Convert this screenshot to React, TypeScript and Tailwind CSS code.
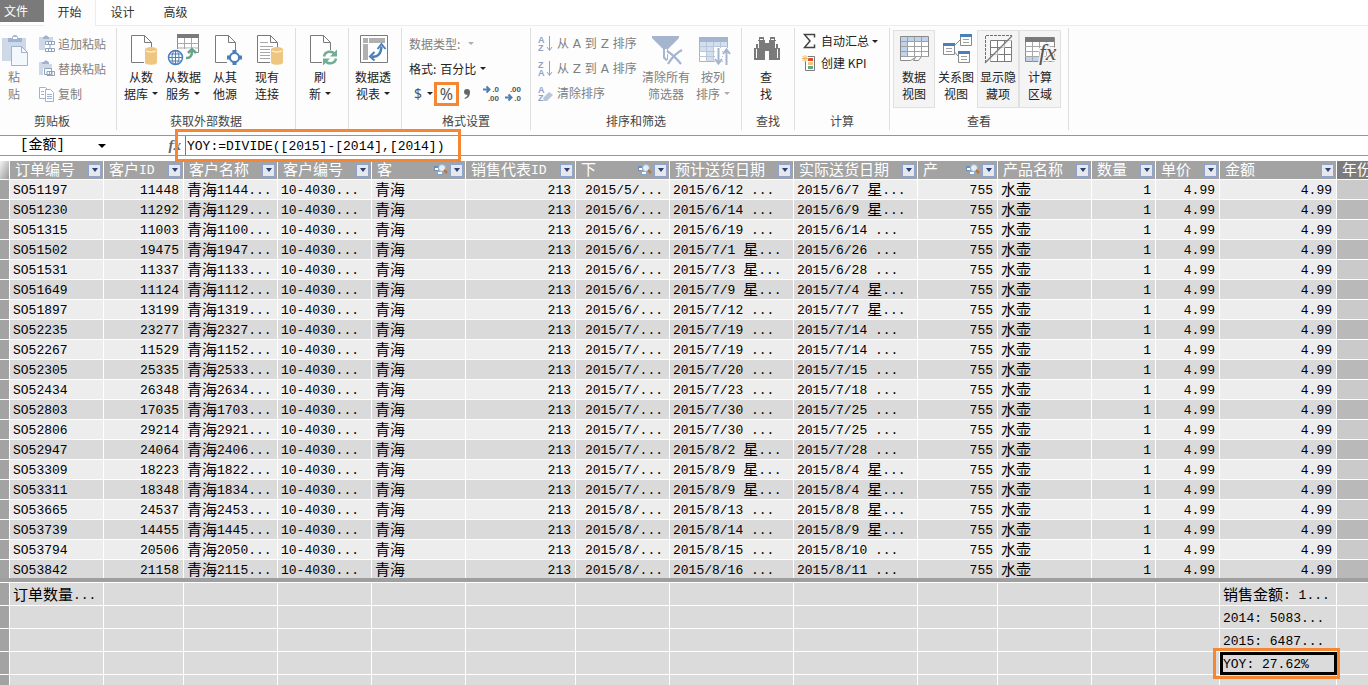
import type { ReactNode } from "react";
import clsx from "clsx";

type Order = {
  no: string;
  customer: string;
  ordered: string;
  due: string;
  shipped: string;
};

type Column = {
  title: string;
  width: string;
  align?: "right" | "indent";
  related?: boolean;
  value: (order: Order) => string;
};

const orders: Order[] = [
  { no: "SO51197", customer: "11448", ordered: "2015/5/...", due: "2015/6/12 ...", shipped: "2015/6/7 星..." },
  { no: "SO51230", customer: "11292", ordered: "2015/6/...", due: "2015/6/14 ...", shipped: "2015/6/9 星..." },
  { no: "SO51315", customer: "11003", ordered: "2015/6/...", due: "2015/6/19 ...", shipped: "2015/6/14 ..." },
  { no: "SO51502", customer: "19475", ordered: "2015/6/...", due: "2015/7/1 星...", shipped: "2015/6/26 ..." },
  { no: "SO51531", customer: "11337", ordered: "2015/6/...", due: "2015/7/3 星...", shipped: "2015/6/28 ..." },
  { no: "SO51649", customer: "11124", ordered: "2015/6/...", due: "2015/7/9 星...", shipped: "2015/7/4 星..." },
  { no: "SO51897", customer: "13199", ordered: "2015/6/...", due: "2015/7/12 ...", shipped: "2015/7/7 星..." },
  { no: "SO52235", customer: "23277", ordered: "2015/7/...", due: "2015/7/19 ...", shipped: "2015/7/14 ..." },
  { no: "SO52267", customer: "11529", ordered: "2015/7/...", due: "2015/7/19 ...", shipped: "2015/7/14 ..." },
  { no: "SO52305", customer: "25335", ordered: "2015/7/...", due: "2015/7/20 ...", shipped: "2015/7/15 ..." },
  { no: "SO52434", customer: "26348", ordered: "2015/7/...", due: "2015/7/23 ...", shipped: "2015/7/18 ..." },
  { no: "SO52803", customer: "17035", ordered: "2015/7/...", due: "2015/7/30 ...", shipped: "2015/7/25 ..." },
  { no: "SO52806", customer: "29214", ordered: "2015/7/...", due: "2015/7/30 ...", shipped: "2015/7/25 ..." },
  { no: "SO52947", customer: "24064", ordered: "2015/7/...", due: "2015/8/2 星...", shipped: "2015/7/28 ..." },
  { no: "SO53309", customer: "18223", ordered: "2015/7/...", due: "2015/8/9 星...", shipped: "2015/8/4 星..." },
  { no: "SO53311", customer: "18348", ordered: "2015/7/...", due: "2015/8/9 星...", shipped: "2015/8/4 星..." },
  { no: "SO53665", customer: "24537", ordered: "2015/8/...", due: "2015/8/13 ...", shipped: "2015/8/8 星..." },
  { no: "SO53739", customer: "14455", ordered: "2015/8/...", due: "2015/8/14 ...", shipped: "2015/8/9 星..." },
  { no: "SO53794", customer: "20506", ordered: "2015/8/...", due: "2015/8/15 ...", shipped: "2015/8/10 ..." },
  { no: "SO53842", customer: "21158", ordered: "2015/8/...", due: "2015/8/16 ...", shipped: "2015/8/11 ..." },
];

const columns: Column[] = [
  { title: "订单编号", width: "w-[94px]", value: (o) => o.no },
  { title: "客户ID", width: "w-[80px]", align: "right", value: (o) => o.customer },
  { title: "客户名称", width: "w-[94px]", value: (o) => `青海${o.customer.slice(0, 4)}...` },
  { title: "客户编号", width: "w-[94px]", value: () => "10-4030..." },
  { title: "客", width: "w-[94px]", related: true, value: () => "青海" },
  { title: "销售代表ID", width: "w-[110px]", align: "right", value: () => "213" },
  { title: "下", width: "w-[94px]", align: "indent", related: true, value: (o) => o.ordered },
  { title: "预计送货日期", width: "w-[124px]", value: (o) => o.due },
  { title: "实际送货日期", width: "w-[124px]", value: (o) => o.shipped },
  { title: "产", width: "w-[80px]", align: "right", related: true, value: () => "755" },
  { title: "产品名称", width: "w-[94px]", value: () => "水壶" },
  { title: "数量", width: "w-[64px]", align: "right", value: () => "1" },
  { title: "单价", width: "w-[64px]", align: "right", value: () => "4.99" },
  { title: "金额", width: "w-[117px]", align: "right", value: () => "4.99" },
];

// first and last columns are the only ones that hold measures
const measures = [
  { first: "订单数量...", last: "销售金额: 1..." },
  { first: "", last: "2014: 5083..." },
  { first: "", last: "2015: 6487..." },
  { first: "", last: "YOY: 27.62%", selected: true },
  { first: "", last: "" },
];

// Chinese runs are set a bit larger than the monospaced Latin ones
function Mixed({ text }: { text: string }) {
  return (
    <>
      {text.split(/([\u4e00-\u9fff]+)/).map((part, i) =>
        i % 2 ? (
          <span key={i} className="align-[-1px] text-[15px] leading-none">
            {part}
          </span>
        ) : (
          part
        )
      )}
    </>
  );
}

function Caret({ muted }: { muted?: boolean }) {
  return (
    <svg viewBox="0 0 6 3" className={clsx("inline-block h-[3px] w-1.5 shrink-0", muted ? "fill-[#b0b0b0]" : "fill-[#222]")}>
      <path d="M0 0h6L3 3z" />
    </svg>
  );
}

/* ---------- ribbon icons ---------- */

function Icon({ children }: { children: ReactNode }) {
  return (
    <svg viewBox="0 0 32 32" className="h-8 w-8 shrink-0 overflow-visible" fill="none" aria-hidden="true">
      {children}
    </svg>
  );
}

function SmallIcon({ children }: { children: ReactNode }) {
  return (
    <svg viewBox="0 0 16 16" className="h-4 w-4 shrink-0 overflow-visible" fill="none" aria-hidden="true">
      {children}
    </svg>
  );
}

const Page = () => (
  <path d="M6.5 1.5h13l7 7v20h-20zM19.5 1.5v7h7" fill="#fff" stroke="#7a7a7a" />
);

const Cylinder = () => (
  <>
    <path d="M19 14h14v18H19z" fill="#fdfdfd" />
    <path d="M20 15.5v13c0 3 12 3 12 0v-13z" fill="#eec680" />
    <ellipse cx="26" cy="15.5" rx="6" ry="2.5" fill="#eec680" />
    <path d="M21 16.5c1.5 2 8.500 2 10 0" stroke="#fff" />
  </>
);

const PasteIcon = () => (
  <Icon>
    <path d="M4 4h24v23H4z" fill="#cdd8e8" />
    <path d="M10 8V4h4c0-4 6-4 6 0h4v4z" fill="#9fb2cf" />
    <path d="M15 3h4v2h-4z" fill="#fff" />
    <path d="M13.500 12.500h10l6 6v13h-16z" fill="#f4f7fb" stroke="#9fb2cf" />
    <path d="M23.500 12.500v6h6" stroke="#9fb2cf" />
  </Icon>
);

const DatabaseIcon = () => (
  <Icon>
    <Page />
    <Cylinder />
  </Icon>
);

const DataServiceIcon = () => (
  <Icon>
    <path d="M10.500.5h21v18h-21z" fill="#fff" stroke="#8a8a8a" />
    <path d="M10 0h22v4H10z" fill="#7a7a7a" />
    <path d="M10 9.500h22M10 14h22M17.500 4v15M24.500 4v15" stroke="#a8a8a8" />
    <path d="M0 15h17l11-1v12H16v6H0z" fill="#fdfdfd" />
    <path d="M19 24c4 .5 6-2 6-7M21 19l4-4 4 4" stroke="#66a58c" strokeWidth="2.500" />
    <circle cx="8.500" cy="23.500" r="7" fill="#fff" stroke="#4a7fb8" strokeWidth="1.500" />
    <ellipse cx="8.500" cy="23.500" rx="3.500" ry="7" stroke="#4a7fb8" />
    <path d="M1.500 23.500h14M8.500 16.500v14M2.500 20h12M2.500 27h12" stroke="#4a7fb8" />
  </Icon>
);

const OtherSourceIcon = () => (
  <Icon>
    <Page />
    <path d="M18 16h15v16H18z" fill="#fdfdfd" />
    <circle cx="25.500" cy="23.500" r="4.500" fill="#fff" stroke="#4a7fb8" strokeWidth="2" />
    <path d="M23.500 16h4v3h-4zM23.500 28h4v3h-4zM18 21.500h3v4h-3zM30 21.500h3v4h-3z" fill="#4a7fb8" />
  </Icon>
);

const ConnectionIcon = () => (
  <Icon>
    <Page />
    <path d="M9 8.500h8M9 12.500h13M9 15.500h11M9 18.500h10M9 21.500h10M9 24.500h10" stroke="#a8a8a8" />
    <Cylinder />
  </Icon>
);

const RefreshIcon = () => (
  <Icon>
    <Page />
    <path d="M18 16h15v15H18z" fill="#fdfdfd" />
    <path d="M20 22.500c1-5.500 8-6.500 11-2M32 24.500c-1 5.500-8 6.500-11 2" stroke="#73ad95" strokeWidth="2.500" />
    <path d="M33 15.500v7h-7zM19 31.500v-7h7z" fill="#73ad95" />
  </Icon>
);

const PivotIcon = () => (
  <Icon>
    <path d="M3.500 1.500h27v27h-27z" fill="#fff" stroke="#7a7a7a" />
    <path d="M6 4h5v5H6zM12 4h16v5H12zM6 10h5v16H6z" fill="#b0b0b0" />
    <path d="M15 22.500c6 1 9-3 9.500-10" stroke="#4a7fb8" strokeWidth="2.500" />
    <path d="M20.500 15l4-5 4 5M17.500 18l-4.500 4.500 4.500 4" stroke="#4a7fb8" strokeWidth="2" />
  </Icon>
);

const ClearFilterIcon = () => (
  <Icon>
    <path d="M2 2h27v2L18 15v13h-1l-4-4v-9L2 4z" fill="#a6b5cf" />
    <path d="M15 15v8l2 2V15z" fill="#fff" />
    <path d="M18 17l14 14M31 16L17 30" stroke="#fdfdfd" strokeWidth="5" />
    <path d="M17 17c5 3 10 8 14 13M32 16c-6 3-11 9-14 14" stroke="#a6b5cf" strokeWidth="2.200" />
  </Icon>
);

const SortColumnIcon = () => (
  <Icon>
    <path d="M2.500 3.500h28v24h-28z" fill="#fff" stroke="#a6b5cf" />
    <path d="M3 8h13v9H3zM9 17h7v10H9zM16 8h14v5H16z" fill="#d3deee" />
    <path d="M2 3h29v5H2z" fill="#a6b5cf" />
    <path d="M2 12.500h29M2 17.500h29M2 22.500h29M9.500 8v20M16.500 8v20M23.500 8v20" stroke="#b9c6da" />
    <path d="M18 14h7v17h-7zM26 14h7v18h-7z" fill="#fdfdfd" />
    <path d="M21.500 14v15M18 25l3.500 4.500L25 25M29.500 31V16M26 20l3.500-4.500L33 20" stroke="#a6b5cf" strokeWidth="2" />
  </Icon>
);

const FindIcon = () => (
  <Icon>
    <path d="M9 3h5v3h1v3h4V6h1V3h5v3h1v4h2v4h2v12H19v-9h-4v9H4V14h2v-4h2V6h1z" fill="#7a7a7a" />
    <path d="M8.500 7v7M25.500 7v7M6.500 15v9M27.500 15v9M10 5.500h3M21 5.500h3" stroke="#fff" />
  </Icon>
);

const DataViewIcon = () => (
  <Icon>
    <path d="M2.500 2.500h28v20h-7l-3 4h-5l2-3-5 3h-10z" fill="#fff" stroke="#8a8a8a" />
    <path d="M3 3h27v5H3zM3 8h6v14H3z" fill="#c0d3ea" />
    <path d="M3 7.500h27M3 12.500h27M3 17.500h27M3 22.500h27M9.500 3v20M16.500 3v20M23.500 3v20" stroke="#a0a0a0" />
  </Icon>
);

const DiagramBox = ({ x, y }: { x: number; y: number }) => (
  <g transform={`translate(${x} ${y})`}>
    <path d="M.5.5h11v11H.5z" fill="#fff" stroke="#8a8a8a" />
    <path d="M0 0h12v3H0z" fill="#4a7fb8" />
    <path d="M3 5.500h6M3 8.500h6" stroke="#a0a0a0" />
  </g>
);

const DiagramIcon = () => (
  <Icon>
    <path d="M13 13l7-7M13 16l5 6" stroke="#8a8a8a" />
    <DiagramBox x={20} y={0} />
    <DiagramBox x={3} y={9} />
    <DiagramBox x={18} y={17} />
  </Icon>
);

const HiddenIcon = () => (
  <Icon>
    <path d="M3.500 29V1.500H30" stroke="#6f6f6f" strokeDasharray="3 1" />
    <path d="M8.500 6.500h21v21h-21z" fill="#fff" stroke="#7a7a7a" />
    <path d="M8 13.500h22M8 20.500h22M15.500 6v22M22.500 6v22" stroke="#7a7a7a" />
    <path d="M5 26L30 2V6L10 27z" fill="#f4f4f4" fillOpacity=".6" />
    <path d="M3 29L30 2" stroke="#7a7a7a" strokeWidth="1.200" />
  </Icon>
);

const CalcAreaIcon = () => (
  <Icon>
    <path d="M1.500 3.500h29v24h-29z" fill="#fff" stroke="#8a8a8a" />
    <path d="M1 3h29v5H1z" fill="#7a7a7a" />
    <path d="M2 23h17v4H2z" fill="#c0d3ea" />
    <path d="M1 12.500h29M1 17.500h29M1 22.500h29M8.500 8v20M15.500 8v20M22.500 8v20" stroke="#a8a8a8" />
    <text x="15" y="26" className="font-['Liberation_Serif',serif] text-[24px] italic" fill="#555" stroke="#f4f4f4" strokeWidth="3" paintOrder="stroke">
      fx
    </text>
  </Icon>
);

const PasteAppendIcon = () => (
  <SmallIcon>
    <path d="M0 1h14v13H0z" fill="#cdd8e8" />
    <path d="M4 3V1h1c0-2 4-2 4 0h1v2z" fill="#9fb2cf" />
    <path d="M6 5h10v10H6z" fill="#fff" />
    <path d="M6.500 5.500h9v3h-9zM6.500 12.500h9v3h-9zM9.500 5v4M12.500 5v4M9.500 12v4M12.500 12v4M11 9v3" stroke="#8fa1bd" />
  </SmallIcon>
);

const PasteReplaceIcon = () => (
  <SmallIcon>
    <path d="M0 1h5v13H0zM5 3h8v4H5z" fill="#cdd8e8" />
    <path d="M3 3V1h2c0-2 4-2 4 0h1v2z" fill="#9fb2cf" />
    <path d="M4 7h12v8H4z" fill="#fff" />
    <path d="M5.500 7.500h7v6h-7zM8 10.500h7.500v4H8zM10.500 11v3M13 11v3" stroke="#8fa1bd" />
  </SmallIcon>
);

const CopyIcon = () => (
  <SmallIcon>
    <path d="M.5 1.500h6l2 2v9h-8z" fill="#fff" stroke="#9fb2cf" />
    <path d="M6.500 3.500h5l3 3v9h-8z" fill="#fff" stroke="#9fb2cf" />
    <path d="M2 5.500h3M2 8.500h3M8 8.500h5M8 10.500h5M8 12.500h5" stroke="#9fb2cf" />
  </SmallIcon>
);

function SortIcon({ letters }: { letters: string }) {
  return (
    <SmallIcon>
      <text x="0" y="7" className="font-['Liberation_Sans',sans-serif] text-[9px] font-bold" fill="#8fa3c4">
        {letters[0]}
      </text>
      <text x="0" y="15" className="font-['Liberation_Sans',sans-serif] text-[9px] font-bold" fill="#8fa3c4">
        {letters[1]}
      </text>
      <path d="M11.500 0v14M9 11l2.500 3.500L14 11" stroke="#8fa3c4" />
    </SmallIcon>
  );
}

const ClearSortIcon = () => (
  <SmallIcon>
    <text x="0" y="7" className="font-['Liberation_Sans',sans-serif] text-[9px] font-bold" fill="#8fa3c4">
      A
    </text>
    <text x="0" y="15" className="font-['Liberation_Sans',sans-serif] text-[9px] font-bold" fill="#8fa3c4">
      Z
    </text>
    <path d="M5 12l6-6 4 3-6 6H6z" fill="#b9c6da" />
  </SmallIcon>
);

const SigmaIcon = () => (
  <SmallIcon>
    <path d="M12.500 4.500v-3H2.500L8 8l-5.500 6.500h10v-3" stroke="#444" strokeWidth="1.500" />
  </SmallIcon>
);

const KpiIcon = () => (
  <SmallIcon>
    <path d="M3.500 1.500h9v14h-9z" fill="#fff" stroke="#7a7a7a" />
    <path d="M6 3h5v3H6z" fill="#d9502e" />
    <path d="M6 7h5v3H6z" fill="#eec680" />
    <path d="M6 11h5v3H6z" fill="#66a58c" />
    <path d="M0 0h6v6H0z" fill="#fdfdfd" />
    <path d="M3 0v7M0 3.500h6.500M.5 1l5 5M5.500 1l-5 5" stroke="#e8b866" />
  </SmallIcon>
);

function DecimalIcon({ top, bottom, arrowTop }: { top: string; bottom: string; arrowTop?: boolean }) {
  return (
    <SmallIcon>
      <text x="16" y="6" textAnchor="end" className="font-['Liberation_Sans',sans-serif] text-[8px] font-bold" fill="#555">
        {top}
      </text>
      <text x="16" y="15" textAnchor="end" className="font-['Liberation_Sans',sans-serif] text-[8px] font-bold" fill="#555">
        {bottom}
      </text>
      <path d={arrowTop ? "M0 3.500h6M3.500.5l3 3-3 3" : "M0 11.500h6M3.500 8.500l3 3-3 3"} stroke="#4a7fb8" strokeWidth="2" />
    </SmallIcon>
  );
}

const RelatedIcon = () => (
  <svg viewBox="0 0 14 12" className="h-3 w-3.5 shrink-0" fill="none" aria-hidden="true">
    <path d="M0 2h5v5H0z" fill="#6f8db3" />
    <path d="M1 4h3v2H1z" fill="#fff" />
    <path d="M3 6h6v5H3z" fill="#86a3c8" />
    <path d="M4 8h4v2H4z" fill="#fff" />
    <circle cx="8" cy="4" r="3.500" fill="#e4eef8" stroke="#9db4cf" />
    <path d="M10 6l3 3" stroke="#b9793d" strokeWidth="2.500" />
  </svg>
);

/* ---------- ribbon ---------- */

function Group({ label, width, children }: { label: string; width: string; children: ReactNode }) {
  return (
    <section className={clsx("flex h-[102px] shrink-0 flex-col border-r border-[#dedede] pt-0.5", width)}>
      <div className="flex h-[78px] pl-[3px]">{children}</div>
      <h2 className="pt-1 text-center leading-[18px] text-[#444]">{label}</h2>
    </section>
  );
}

type BigButtonProps = {
  icon: ReactNode;
  lines: [string, string];
  caret?: boolean;
  disabled?: boolean;
  active?: boolean;
  width?: string;
};

function BigButton({ icon, lines, caret, disabled, active, width = "w-[42px]" }: BigButtonProps) {
  return (
    <button
      type="button"
      disabled={disabled}
      className={clsx(
        "flex h-[78px] shrink-0 flex-col items-center border pt-[3px] leading-[17px] whitespace-nowrap",
        width,
        active ? "border-[#e0e0e0] bg-[#f4f4f4]" : "border-transparent",
        disabled ? "text-[#808080]" : "text-[#222]"
      )}
    >
      {icon}
      <span className="mt-0.5">{lines[0]}</span>
      <span className="flex items-center gap-1">
        {lines[1]}
        {caret && <Caret muted={disabled} />}
      </span>
    </button>
  );
}

function SmallButton({ icon, label, caret, disabled, height = "h-[25px]" }: {
  icon: ReactNode;
  label: string;
  caret?: boolean;
  disabled?: boolean;
  height?: string;
}) {
  return (
    <button
      type="button"
      disabled={disabled}
      className={clsx("flex items-center gap-[3px] whitespace-nowrap", height, disabled ? "text-[#808080]" : "text-[#222]")}
    >
      {icon}
      {label}
      {caret && <Caret />}
    </button>
  );
}

function Ribbon() {
  return (
    <div className="flex border-t border-[#ececec] bg-[#fdfdfd] pt-0.5 pb-[5px]">
      <section className="flex h-[102px] w-[117px] shrink-0 flex-col border-r border-[#dedede] pt-0.5">
        <div className="flex h-[78px]">
          <BigButton icon={<PasteIcon />} lines={["粘", "贴"]} disabled width="w-7" />
          <div className="ml-[11px] pt-px">
            <SmallButton icon={<PasteAppendIcon />} label="追加粘贴" disabled />
            <SmallButton icon={<PasteReplaceIcon />} label="替换粘贴" disabled />
            <SmallButton icon={<CopyIcon />} label="复制" disabled />
          </div>
        </div>
        <h2 className="pt-1 pr-3 text-center leading-[18px] text-[#444]">剪贴板</h2>
      </section>

      <Group label="获取外部数据" width="w-[179px]">
        <BigButton icon={<DatabaseIcon />} lines={["从数", "据库"]} caret />
        <BigButton icon={<DataServiceIcon />} lines={["从数据", "服务"]} caret />
        <BigButton icon={<OtherSourceIcon />} lines={["从其", "他源"]} />
        <BigButton icon={<ConnectionIcon />} lines={["现有", "连接"]} />
      </Group>

      <section className="flex h-[102px] w-[53px] shrink-0 border-r border-[#dedede] pt-0.5 pl-[3px]">
        <BigButton icon={<RefreshIcon />} lines={["刷", "新"]} caret />
      </section>
      <section className="flex h-[102px] w-[53px] shrink-0 border-r border-[#dedede] pt-0.5 pl-[3px]">
        <BigButton icon={<PivotIcon />} lines={["数据透", "视表"]} caret />
      </section>

      <Group label="格式设置" width="w-[129px]">
        <div className="pt-px pl-1">
          <div className="flex h-[25px] items-center text-[#808080]">
            <label htmlFor="data-type">数据类型:</label>
            <select id="data-type" disabled className="w-2 appearance-none" />
            <Caret muted />
          </div>
          <div className="flex h-[25px] items-center text-[#222]">
            <label htmlFor="format">格式:</label>
            <select id="format" className="ml-1 w-10 appearance-none">
              <option>百分比</option>
            </select>
            <Caret />
          </div>
          <div className="flex h-[25px] items-center text-[#555]">
            <button type="button" className="flex items-center">
              <span className="w-[18px] text-center font-['Noto_Sans',sans-serif] text-sm">$</span>
              <Caret />
            </button>
            <button
              type="button"
              className="ml-px h-6 w-[25px] border-[3px] border-[#f58634] font-['Noto_Sans',sans-serif] text-base leading-[18px]"
            >
              %
            </button>
            <button type="button" aria-label="千位分隔符" className="ml-1 w-2">
              <svg viewBox="0 0 8 10" className="h-2.5 w-2 fill-[#666]" aria-hidden="true">
                <path d="M1 3a3 3 0 0 1 6 0c0 4-2 6-5 7l-.5-1C3.500 8 4.500 7 4.500 5.800 2.500 6 1 5 1 3z" />
              </svg>
            </button>
            <button type="button" aria-label="增加小数位数" className="ml-3">
              <DecimalIcon top=".0" bottom=".00" arrowTop />
            </button>
            <button type="button" aria-label="减少小数位数" className="ml-1.5">
              <DecimalIcon top=".00" bottom=".0" />
            </button>
          </div>
        </div>
      </Group>

      <Group label="排序和筛选" width="w-[211px]">
        <div className="w-[106px] pt-px pl-1 font-['DejaVu_Sans','Noto_Sans_CJK_SC',sans-serif]">
          <SmallButton icon={<SortIcon letters="AZ" />} label="从 A 到 Z 排序" disabled />
          <SmallButton icon={<SortIcon letters="ZA" />} label="从 Z 到 A 排序" disabled />
          <SmallButton icon={<ClearSortIcon />} label="清除排序" disabled />
        </div>
        <BigButton icon={<ClearFilterIcon />} lines={["清除所有", "筛选器"]} disabled width="w-[52px]" />
        <BigButton icon={<SortColumnIcon />} lines={["按列", "排序"]} caret disabled />
      </Group>

      <Group label="查找" width="w-[53px]">
        <BigButton icon={<FindIcon />} lines={["查", "找"]} />
      </Group>

      <Group label="计算" width="w-[95px]">
        <div className="pl-1">
          <SmallButton icon={<SigmaIcon />} label="自动汇总" caret height="h-[22px]" />
          <SmallButton icon={<KpiIcon />} label="创建 KPI" height="h-[22px]" />
        </div>
      </Group>

      <Group label="查看" width="w-[179px]">
        <BigButton icon={<DataViewIcon />} lines={["数据", "视图"]} active />
        <BigButton icon={<DiagramIcon />} lines={["关系图", "视图"]} />
        <BigButton icon={<HiddenIcon />} lines={["显示隐", "藏项"]} active />
        <BigButton icon={<CalcAreaIcon />} lines={["计算", "区域"]} active />
      </Group>
    </div>
  );
}

function FormulaBar() {
  return (
    <div className="mb-[5px] flex h-[21px] border-y border-[#969696] bg-white">
      <div className="flex w-[112px] items-center">
        <select aria-label="列" className="ml-5 w-[78px] appearance-none text-[14px] leading-[19px]">
          <option>[金额]</option>
        </select>
        <svg viewBox="0 0 8 4" className="h-1 w-2 fill-black" aria-hidden="true">
          <path d="M0 0h8L4 4z" />
        </svg>
      </div>
      <button
        type="button"
        aria-label="插入函数"
        className="w-[73px] pr-1 text-right font-['Liberation_Serif',serif] text-[15px] leading-[19px] font-bold text-[#666] italic"
      >
        fx
      </button>
      <div className="relative flex flex-1">
        <input
          aria-label="公式"
          defaultValue="YOY:=DIVIDE([2015]-[2014],[2014])"
          className="w-full border-l border-[#777] pt-0.5 pl-px text-[13px] text-black outline-none"
        />
        <span className="pointer-events-none absolute -top-[7px] -bottom-[7px] -left-2.5 z-10 w-[286px] border-[3px] border-[#f58634]" />
      </div>
    </div>
  );
}

/* ---------- grid ---------- */

function Columns() {
  return (
    <colgroup>
      <col className="w-2.5" />
      {columns.map((c) => (
        <col key={c.title} className={c.width} />
      ))}
      <col />
    </colgroup>
  );
}

function DataGrid() {
  return (
    <table className="w-full table-fixed border-separate border-spacing-0 text-[13px] leading-[17px] whitespace-nowrap text-black">
      <Columns />
      <thead>
        <tr>
          <th className="h-[19px] border-r border-b border-white bg-gradient-to-br from-[#f4f4f4] to-[#9a9a9a] p-0" />
          {columns.map((c) => (
            <th key={c.title} className="h-[19px] border-r border-b border-white bg-[#a3a3a3] p-0 font-normal text-white">
              <div className="flex h-[18px] items-center pr-0.5 pl-[5px]">
                <span className="flex-1 overflow-hidden pt-px text-left">
                  <Mixed text={c.title} />
                </span>
                {c.related && <RelatedIcon />}
                <button
                  type="button"
                  aria-label={`筛选${c.title}`}
                  className="ml-0.5 flex h-[13px] w-[13px] shrink-0 items-center justify-center border border-[#8ea6cf] bg-[#e6e8ec]"
                >
                  <svg viewBox="0 0 6 4" className="h-1 w-1.5 fill-[#2b3f78]" aria-hidden="true">
                    <path d="M0 0h6L3 4z" />
                  </svg>
                </button>
              </div>
            </th>
          ))}
          <th className="h-[19px] overflow-hidden border-b border-white bg-[#7c7c7c] p-0 pt-px pl-[5px] text-left font-normal text-white">
            <Mixed text="年份" />
          </th>
        </tr>
      </thead>
      <tbody>
        {orders.map((order, i) => (
          <tr key={order.no} className={i % 2 ? "bg-[#dadada]" : "bg-[#ededed]"}>
            <td className="h-5 border-r border-b border-white bg-[#a3a3a3] p-0" />
            {columns.map((c) => (
              <td
                key={c.title}
                className={clsx(
                  "h-5 overflow-hidden border-r border-b border-white p-0 pt-0.5",
                  c.align === "right" && "pr-1 text-right",
                  c.align === "indent" && "pl-[9px]",
                  !c.align && "pl-[3px]"
                )}
              >
                <Mixed text={c.value(order)} />
              </td>
            ))}
            <td className={clsx("h-5 border-b border-white p-0", i % 2 ? "bg-[#b9b9b9]" : "bg-[#cacaca]")} />
          </tr>
        ))}
      </tbody>
    </table>
  );
}

function MeasureGrid() {
  return (
    <table className="w-full table-fixed border-separate border-spacing-0 text-[13px] leading-[19px] whitespace-nowrap text-black">
      <Columns />
      <tbody>
        {measures.map((m, i) => (
          <tr key={i} className="bg-[#dbdbdb]">
            <td className="h-[23px] border-t border-r border-white bg-[#a3a3a3] p-0" />
            {columns.map((c, j) => {
              const isLast = j === columns.length - 1;
              return (
                <td key={c.title} className="relative h-[23px] border-t border-r border-white p-0 pt-[3px] pl-[3px]">
                  {j === 0 && <Mixed text={m.first} />}
                  {isLast && <Mixed text={m.last} />}
                  {isLast && m.selected && (
                    <>
                      <span className="absolute top-0 -right-px -bottom-px left-0 z-10 border-[3px] border-black" />
                      <span className="absolute -top-1 -right-1 -bottom-[5px] -left-[7px] z-10 border-[3px] border-[#f58634]" />
                    </>
                  )}
                </td>
              );
            })}
            <td className="h-[23px] border-t border-white p-0" />
          </tr>
        ))}
      </tbody>
    </table>
  );
}

export default function App() {
  return (
    <div className="h-screen overflow-hidden bg-white font-['Liberation_Mono','Noto_Sans_CJK_SC',monospace]">
      <header className="font-['Noto_Sans_CJK_SC',sans-serif] text-xs">
        <nav className="flex h-[25px] text-[#333]">
          <button type="button" className="h-[22px] w-11 bg-[#7a7a7a] pr-3 text-white">
            文件
          </button>
          <button type="button" className="-mb-px w-[52px] border-r border-[#ececec] bg-[#fdfdfd] pb-0.5">
            开始
          </button>
          <button type="button" className="w-[53px] pb-0.5">
            设计
          </button>
          <button type="button" className="w-[53px] pb-0.5">
            高级
          </button>
        </nav>
        <Ribbon />
      </header>
      <FormulaBar />
      <DataGrid />
      <div className="relative z-10 -mt-0.5 h-1 bg-[#9f9f9f]" />
      <MeasureGrid />
    </div>
  );
}
